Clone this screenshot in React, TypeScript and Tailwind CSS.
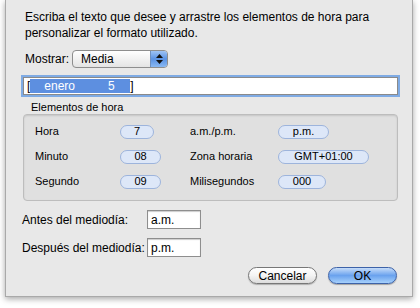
import React from 'react';

const font = { fontFamily: '"Lucida Grande", "Liberation Sans", Arial, sans-serif' };

const Token: React.FC<{ label: string; width: string }> = ({ label, width }) => (
  <div
    className={`${width} h-[14px] rounded-full border border-[#9db4dc] bg-[#dde7f8] flex items-center justify-center text-[11px] leading-none text-black`}
  >
    {label}
  </div>
);

const rows = [
  ['Hora', '7', 'w-[34px]', 'a.m./p.m.', 'p.m.', 'w-[51px]'],
  ['Minuto', '08', 'w-[41px]', 'Zona horaria', 'GMT+01:00', 'w-[91px]'],
  ['Segundo', '09', 'w-[41px]', 'Milisegundos', '000', 'w-[48px]'],
];

export default function App() {
  return (
    <div className="w-[420px] h-[308px] bg-white overflow-hidden whitespace-nowrap" style={font}>
      <div className="ml-[5px] w-[408px] h-[297px] bg-[#e8e8e8] border-x border-b border-[#a9a9a9] shadow-[0_2px_6px_rgba(0,0,0,0.35)] text-black flex flex-col">
        {/* Instructions */}
        <div className="pl-[19px] pt-[9px] text-[12px] leading-[16px]">
          <p>Escriba el texto que desee y arrastre los elementos de hora para</p>
          <p>personalizar el formato utilizado.</p>
        </div>

        {/* Mostrar */}
        <div className="flex items-center pl-[19px] mt-[9px] h-[18px] text-[12px]">
          <span className="w-[47px]">Mostrar:</span>
          <div className="w-[96px] h-[18px] rounded-[4px] border border-[#8e8e8e] bg-gradient-to-b from-white to-[#e4e4e4] flex items-center overflow-hidden">
            <span className="flex-1 pl-[8px]">Media</span>
            <div className="w-[17px] h-full bg-gradient-to-b from-[#9ec3f4] via-[#5a92e3] to-[#8ab9f3] border-l border-[#6f8fbd] flex flex-col items-center justify-center gap-[2px]">
              <svg width="7" height="4" viewBox="0 0 7 4"><path d="M0 4 L3.5 0 L7 4 Z" fill="#111" /></svg>
              <svg width="7" height="4" viewBox="0 0 7 4"><path d="M0 0 L3.5 4 L7 0 Z" fill="#111" /></svg>
            </div>
          </div>
        </div>

        {/* Token field */}
        <div className="ml-[17px] mt-[9px] w-[375px] h-[18px] bg-white border border-[#8a8a8a] shadow-[0_0_0_2px_#7fabe4] flex items-center pl-[3px] text-[12px]">
          <span>[</span>
          <div className="w-[100px] h-[14px] bg-[#5d8fe0] text-white flex items-center">
            <span className="ml-[14px]">enero</span>
            <span className="ml-[33px]">5</span>
          </div>
          <span>]</span>
        </div>

        {/* Elementos de hora */}
        <div className="pl-[25px] mt-[6px] text-[11px] leading-[12px]">Elementos de hora</div>
        <div className="ml-[17px] mt-[1px] w-[375px] h-[87px] rounded-[4px] border border-[#bdbdbd] bg-[#e0e0e0] shadow-[inset_0_1px_2px_rgba(0,0,0,0.12)] pl-[11px] pt-[4px] text-[11px]">
          {rows.map(([l, lt, lw, r, rt, rw]) => (
            <div key={l} className="flex items-center h-[25px]">
              <span className="w-[85px]">{l}</span>
              <div className="w-[70px]">
                <Token label={lt} width={lw} />
              </div>
              <span className="w-[88px]">{r}</span>
              <Token label={rt} width={rw} />
            </div>
          ))}
        </div>

        {/* AM / PM */}
        <div className="pl-[16px] mt-[9px] flex flex-col gap-[9px] text-[12px]">
          <div className="flex items-center">
            <span className="w-[125px]">Antes del mediodía:</span>
            <div className="w-[54px] h-[19px] bg-white border border-[#8e8e8e] shadow-[inset_0_1px_1px_rgba(0,0,0,0.2)] pl-[3px] flex items-center">a.m.</div>
          </div>
          <div className="flex items-center">
            <span className="w-[125px]">Después del mediodía:</span>
            <div className="w-[54px] h-[19px] bg-white border border-[#8e8e8e] shadow-[inset_0_1px_1px_rgba(0,0,0,0.2)] pl-[3px] flex items-center">p.m.</div>
          </div>
        </div>

        {/* Buttons */}
        <div className="flex justify-end gap-[11px] pr-[15px] mt-[10px] text-[12px]">
          <button className="w-[69px] h-[17px] rounded-full border border-[#777] bg-gradient-to-b from-white via-[#f4f4f4] to-[#dcdcdc] shadow-[0_1px_1px_rgba(0,0,0,0.25)] leading-none">
            Cancelar
          </button>
          <button className="w-[69px] h-[17px] rounded-full border border-[#3d62a8] bg-gradient-to-b from-[#c6dcf8] via-[#6aa2ee] to-[#a6d0fb] shadow-[0_1px_1px_rgba(0,0,0,0.3)] leading-none">
            OK
          </button>
        </div>
      </div>
    </div>
  );
}
